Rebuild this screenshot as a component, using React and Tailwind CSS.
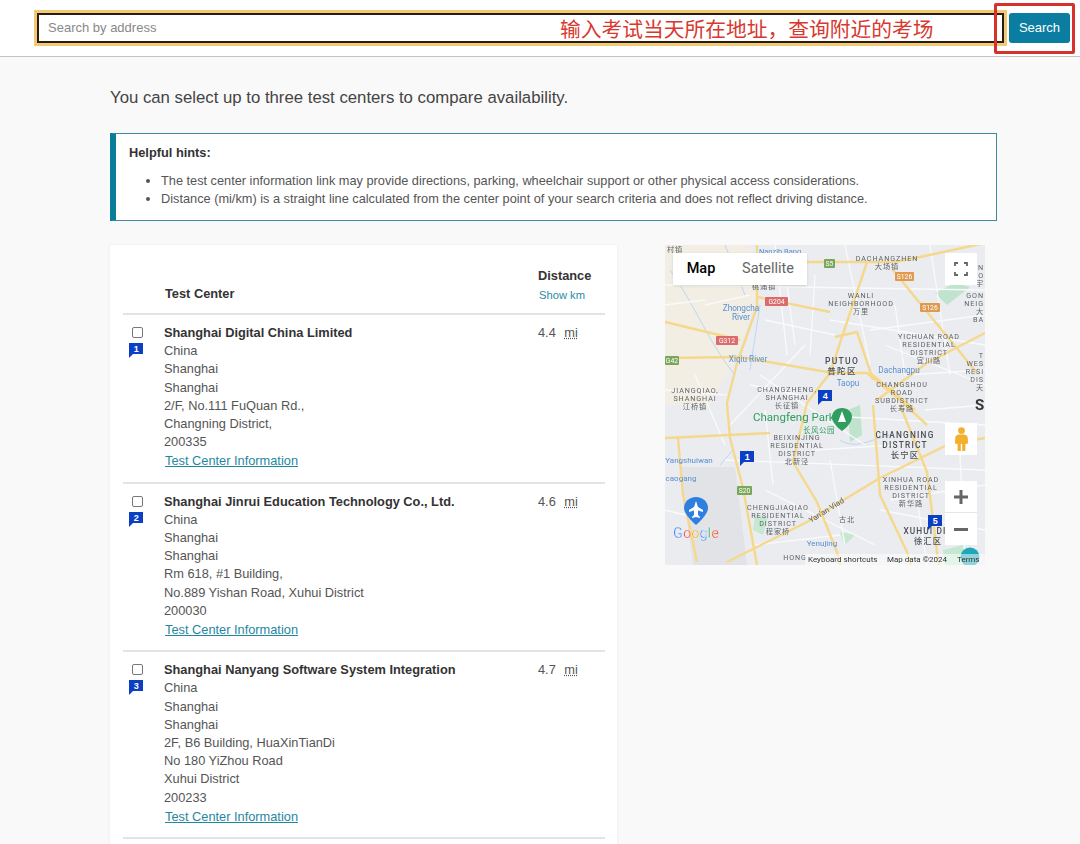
import React from "react";

const centers = [
  { n: 1, name: "Shanghai Digital China Limited", dist: "4.4", lines: ["China", "Shanghai", "Shanghai", "2/F, No.111 FuQuan Rd.,", "Changning District,", "200335"] },
  { n: 2, name: "Shanghai Jinrui Education Technology Co., Ltd.", dist: "4.6", lines: ["China", "Shanghai", "Shanghai", "Rm 618, #1 Building,", "No.889 Yishan Road, Xuhui District", "200030"] },
  { n: 3, name: "Shanghai Nanyang Software System Integration", dist: "4.7", lines: ["China", "Shanghai", "Shanghai", "2F, B6 Building, HuaXinTianDi", "No 180 YiZhou Road", "Xuhui District", "200233"] },
];

const majorRoads = [
  "M142 17 L230 17 L255 12 L320 -2",
  "M92 -5 L92 62 L72 118 L62 158 L65 193 L78 243 L92 320",
  "M0 113 L75 112 L168 128 L202 128 L235 155 L262 180",
  "M202 17 L165 128 L142 158 L128 217 L152 257 L172 307 L175 320",
  "M92 52 L165 67",
  "M0 77 L75 95",
  "M170 92 L192 87 L208 135",
  "M228 25 L258 62 L312 128",
  "M212 155 L262 118 L320 88",
  "M208 160 L212 210 L215 250 L242 307 L246 320",
  "M62 317 L142 277 L215 233 L282 200 L320 193",
  "M0 193 L105 188",
  "M13 193 L18 250 L32 317",
  "M235 160 L262 227 L272 307 L274 320",
  "M205 128 L250 165",
];

const minorRoads = [
  "M0 40 L320 45", "M110 0 L122 110", "M165 75 L320 100", "M0 145 L62 150", "M60 215 L320 225",
  "M180 0 L205 120", "M265 0 L285 130", "M0 265 L20 270", "M95 130 L200 200", "M140 100 L65 180",
  "M30 130 L60 200", "M220 100 L320 140", "M100 245 L210 300", "M150 170 L320 180", "M40 60 L85 50",
  "M120 25 L130 100", "M150 30 L145 110", "M230 60 L240 130", "M100 75 L170 90", "M205 85 L320 70",
  "M85 140 L135 150", "M100 165 L108 240", "M150 205 L230 200", "M165 215 L180 300", "M225 255 L320 240",
  "M90 300 L175 290", "M250 240 L262 320", "M295 210 L300 320", "M215 265 L320 285", "M240 130 L320 125",
  "M260 165 L320 160", "M0 60 L40 55",
];

function Flag({ n, className }) {
  return (
    <svg viewBox="0 0 14 15" className={className} aria-hidden="true">
      <path d="M0 0H14V11H4L0 15Z" fill="#0b3fc4" />
      <text x="7.2" y="8.8" textAnchor="middle" fontSize="9" fontWeight="700" fill="#fff" fontFamily="Liberation Sans, sans-serif">{n}</text>
    </svg>
  );
}

function Label({ x, y, lines, size = 7.2, color = "#5f6368", spacing = 0.9, weight = 400, lh = 8, anchor = "middle" }) {
  return (
    <text x={x} y={y} textAnchor={anchor} fontSize={size} fill={color} fontWeight={weight} letterSpacing={spacing} fontFamily="Roboto, 'Noto Sans CJK SC', sans-serif">
      {lines.map((l, i) => (
        <tspan key={i} x={x} dy={i === 0 ? 0 : lh}>{l}</tspan>
      ))}
    </text>
  );
}

function Shield({ x, y, w, t, fill }) {
  return (
    <g>
      <rect x={x} y={y} width={w} height="9" rx="1" fill={fill} />
      <text x={x + w / 2} y={y + 6.9} textAnchor="middle" fontSize="6.8" fill="#fff" fontFamily="Roboto, sans-serif">{t}</text>
    </g>
  );
}

function MapDrawing() {
  return (
    <svg viewBox="0 0 320 320" className="block h-full w-full blur-[0.35px]" aria-hidden="true">
      <rect width="320" height="320" fill="#eaecef" />
      <path d="M0 0H85L92 50L70 115L45 160H0Z" fill="#f2eee3" />
      <path d="M15 222L70 222L82 320H28Z" fill="#e1e3e6" />
      <path d="M270 48L290 38L305 42L282 60Z" fill="#bfe3cc" />
      <path d="M183 165L195 160L197 190L185 197Z" fill="#bfe3cc" />
      <path d="M90 270L103 272L98 290L88 285Z" fill="#c6e8d0" />
      <path d="M175 287L190 290L180 300Z" fill="#c6e8d0" />
      <path d="M278 305L298 300L305 320H280Z" fill="#c6e8d0" />
      <path d="M60 0L80 50M5 25C30 60 45 100 70 130M95 60L85 125M68 205L55 220M175 195C190 205 205 195 225 190" stroke="#b9d3f0" strokeWidth="0.9" fill="none" />
      {minorRoads.map((d) => (
        <path key={d} d={d} stroke="#f9fafb" strokeWidth="1.3" fill="none" />
      ))}
      {majorRoads.map((d) => (
        <path key={d} d={d} stroke="#f5d88c" strokeWidth="2.4" fill="none" strokeLinejoin="round" />
      ))}
      <Shield x={100} y={52} w={23} t="G204" fill="#dc6b6b" />
      <Shield x={51} y={91} w={22} t="G312" fill="#dc6b6b" />
      <Shield x={159} y={14} w={11} t="S5" fill="#7aa65a" />
      <Shield x={0} y={111} w={14} t="G42" fill="#7aa65a" />
      <Shield x={72} y={241} w={15} t="S20" fill="#7aa65a" />
      <Shield x={230} y={27} w={19} t="S126" fill="#dd9a50" />
      <Shield x={255} y={58} w={20} t="S126" fill="#dd9a50" />
      <Label x={222} y={16} lines={["DACHANGZHEN", "大场镇"]} />
      <Label x={196} y={53} lines={["WANLI", "NEIGHBORHOOD", "万里"]} />
      <Label x={264} y={94} lines={["YICHUAN ROAD", "RESIDENTIAL", "DISTRICT", "宜川路"]} />
      <Label x={177} y={119} lines={["PUTUO", "普陀区"]} size={8.5} lh={10} spacing={1.3} color="#4b4f54" weight={500} />
      <Label x={237} y={142} lines={["CHANGSHOU", "ROAD", "SUBDISTRICT", "长寿路"]} />
      <Label x={122} y={147} lines={["CHANGZHENG,", "SHANGHAI", "长征镇"]} />
      <Label x={30} y={148} lines={["JIANGQIAO,", "SHANGHAI", "江桥镇"]} />
      <Label x={132} y={195} lines={["BEIXINJING", "RESIDENTIAL", "DISTRICT", "北新泾"]} />
      <Label x={240} y={193} lines={["CHANGNING", "DISTRICT", "长宁区"]} size={8.3} lh={10} spacing={1.2} color="#4b4f54" weight={500} />
      <Label x={113} y={265} lines={["CHENGJIAQIAO", "RESIDENTIAL", "DISTRICT", "程家桥"]} />
      <Label x={246} y={237} lines={["XINHUA ROAD", "RESIDENTIAL", "DISTRICT", "新华路"]} />
      <Label x={263} y={289} lines={["XUHUI DIS", "徐汇区"]} size={8.3} lh={10} spacing={1.1} color="#4b4f54" weight={500} />
      <Label x={182} y={277} lines={["古北"]} size={7} />
      <Label x={130} y={315} lines={["HONG"]} />
      <Label x={99} y={44} lines={["桃浦镇"]} />
      <Label x={10} y={7} lines={["村镇"]} />
      <Label x={115} y={9} lines={["Nanzih Bang"]} size={7.5} spacing={0} color="#5a8fd0" />
      <Label x={319} y={53} anchor="end" lines={["GON", "NEIG", "大"]} />
      <Label x={319} y={25} anchor="end" lines={["JIN", "BO", "宇"]} />
      <Label x={319} y={77} anchor="end" lines={["BA"]} />
      <Label x={319} y={113} anchor="end" lines={["T", "WES", "RESI", "DIS", "天"]} />
      <Label x={76} y={66} lines={["Zhongcha", "River"]} size={8.2} lh={9} spacing={0} color="#5a8fd0" />
      <Label x={83} y={117} lines={["Xiqiu River"]} size={8.2} spacing={0} color="#5a8fd0" />
      <Label x={183} y={141} lines={["Taopu"]} size={8.2} spacing={0} color="#5a8fd0" />
      <Label x={234} y={128} lines={["Dachangpu"]} size={8.2} spacing={0} color="#5a8fd0" />
      <Label x={24} y={218} lines={["Yangshuiwan"]} size={8} spacing={0} color="#5a8fd0" />
      <Label x={16} y={236} lines={["caogang"]} size={8} spacing={0} color="#5a8fd0" />
      <Label x={157} y={301} lines={["Yenujing"]} size={8} spacing={0} color="#5a8fd0" />
      <text x="146" y="278" transform="rotate(-32 146 278)" fontSize="7.8" fill="#5f6368" fontFamily="Roboto, sans-serif">Yan'an Viad</text>
      <text x="88" y="176" fontSize="11.5" fill="#2f9e5f" fontFamily="Roboto, sans-serif">Changfeng Park</text>
      <Label x={154} y={188} lines={["长风公园"]} size={7.5} spacing={0.5} color="#2f9e5f" />
      <path d="M177 163C171 163 167 167 167 172C167 179 177 186 177 186C177 186 187 179 187 172C187 167 183 163 177 163Z" fill="#2f9e5f" />
      <path d="M177 166L173 177H181Z" fill="#fff" />
      <path d="M31 252C24 252 19 257 19 263C19 270 31 280 31 280C31 280 43 270 43 263C43 257 38 252 31 252Z" fill="#2f7fe0" />
      <path d="M31 256L33 262L38 265V267L33 265.5V270L35 272V273L31 272L27 273V272L29 270V265.5L24 267V265L29 262Z" fill="#fff" />
      <text x="8" y="293" fontSize="14.5" fontFamily="Roboto, sans-serif" stroke="#fff" strokeWidth="0.3">
        <tspan fill="#4285f4">G</tspan><tspan fill="#ea4335">o</tspan><tspan fill="#e8a905">o</tspan><tspan fill="#4285f4">g</tspan><tspan fill="#34a853">l</tspan><tspan fill="#ea4335">e</tspan>
      </text>
      <circle cx="305" cy="312" r="9.5" fill="#1fa7b8" />
      <rect x="140" y="309" width="180" height="11" fill="#fff" fillOpacity="0.5" />
      <text x="143" y="316.5" fontSize="8" fill="#333" fontFamily="Roboto, sans-serif">Keyboard shortcuts</text>
      <text x="222" y="316.5" fontSize="8" fill="#333" fontFamily="Roboto, sans-serif">Map data ©2024</text>
      <text x="292" y="316.5" fontSize="8" fill="#333" fontFamily="Roboto, sans-serif">Terms</text>
      <text x="310" y="165" fontSize="15" fontWeight="700" fill="#333" fontFamily="Roboto, sans-serif">S</text>
    </svg>
  );
}

function MapPanel() {
  return (
    <div className="relative h-[320px] w-[320px] overflow-hidden">
      <MapDrawing />
      <div className="absolute left-[8px] top-[8px] flex h-[32px] bg-white text-[14.5px] shadow-sm font-['Roboto',sans-serif]">
        <div className="flex w-[56px] items-center justify-center font-medium text-black">Map</div>
        <div className="flex w-[78px] items-center justify-center text-[#666]">Satellite</div>
      </div>
      <div className="absolute left-[280px] top-[8px] flex h-[32px] w-[32px] items-center justify-center bg-white">
        <svg viewBox="0 0 14 14" className="h-[14px] w-[14px]" fill="none" stroke="#666" strokeWidth="1.8" aria-hidden="true">
          <path d="M1 4V1H4M10 1H13V4M13 10V13H10M4 13H1V10" />
        </svg>
      </div>
      <div className="absolute left-[280px] top-[178px] flex h-[32px] w-[32px] items-center justify-center bg-white">
        <svg viewBox="0 0 13 24" className="h-[24px] w-[13px]" aria-hidden="true">
          <circle cx="6.5" cy="3.6" r="3.4" fill="#f3b02c" />
          <path d="M4 7.5H9C11 7.5 12.6 9 12.8 11L13 16.5L10.4 17V23C10.4 23.6 10 24 9.4 24H7.2V17H5.8V24H3.6C3 24 2.6 23.6 2.6 23V17L0 16.5L0.2 11C0.4 9 2 7.5 4 7.5Z" fill="#f3b02c" />
        </svg>
      </div>
      <div className="absolute left-[280px] top-[236px] flex h-[64px] w-[32px] flex-col items-center bg-white">
        <div className="flex h-[32px] w-full items-center justify-center border-b border-[#e6e6e6]">
          <svg viewBox="0 0 14 14" className="h-[14px] w-[14px]" aria-hidden="true"><path d="M5.5 0H8.5V5.5H14V8.5H8.5V14H5.5V8.5H0V5.5H5.5Z" fill="#666" /></svg>
        </div>
        <div className="flex h-[32px] w-full items-center justify-center">
          <svg viewBox="0 0 14 3" className="h-[3px] w-[14px]" aria-hidden="true"><path d="M0 0H14V3H0Z" fill="#666" /></svg>
        </div>
      </div>
      <Flag n={4} className="absolute left-[153px] top-[145px] h-[15px] w-[14px]" />
      <Flag n={1} className="absolute left-[75px] top-[206px] h-[15px] w-[14px]" />
      <Flag n={5} className="absolute left-[263px] top-[270px] h-[15px] w-[14px]" />
    </div>
  );
}

function CenterRow({ c }) {
  return (
    <div className="grid grid-cols-[41px_1fr_67px] border-b-2 border-[#e4e4e4] pb-[11px] pt-[9px]">
      <div className="flex flex-col pt-[3px]">
        <input type="checkbox" className="ml-[9px] h-[11px] w-[11px] appearance-none rounded-[2px] border border-[#777] bg-white" />
        <Flag n={c.n} className="ml-[6px] mt-[5px] h-[15px] w-[14px]" />
      </div>
      <div className="leading-[18.2px]">
        <div className="font-bold text-[#333]">{c.name}</div>
        {c.lines.map((l, i) => (
          <div key={i}>{l}</div>
        ))}
        <a href="#" className="ml-[1px] mt-[1px] block text-[#1f87a0] underline">Test Center Information</a>
      </div>
      <div className="leading-[18.2px]">
        {c.dist} <span className="ml-[5px] underline decoration-dotted">mi</span>
      </div>
    </div>
  );
}

export default function App() {
  return (
    <div className="h-[844px] w-[1080px] overflow-hidden bg-[#f9f9f9] font-['Liberation_Sans',Arial,sans-serif] text-[12.8px] text-[#555]">
      <header className="relative flex h-[57px] items-start gap-[2px] border-b border-[#c4c4c4] bg-white pl-[34px] pt-[10px]">
        <div className="h-[36px] w-[973px] border-[3px] border-[#f0cb72]">
          <div className="flex h-full items-center border-2 border-[#2a1c12] bg-white pl-[9px] pb-[1px] text-[13px] text-[#888]">Search by address</div>
        </div>
        <button className="mt-[3px] h-[30px] w-[61px] rounded-[3px] bg-[#0a7da0] pb-[1px] text-[13px] text-white">Search</button>
        <div className="absolute left-[560px] top-[14px] text-[20.75px] leading-[28px] text-[#d8392f] font-['Noto_Sans_CJK_SC',sans-serif]">输入考试当天所在地址，查询附近的考场</div>
        <div className="absolute left-[994px] top-[3px] h-[51px] w-[81px] rounded-[2px] border-[3px] border-[#d8302a]" />
      </header>

      <main className="ml-[110px] w-[887px]">
        <p className="mt-[31px] text-[16.75px] leading-[20px] text-[#444]">You can select up to three test centers to compare availability.</p>

        <section className="mt-[25px] h-[88px] border border-l-[6px] border-[#3e8b9c] border-l-[#0a7d98] bg-white pl-[13px] pt-[10px]">
          <div className="font-bold leading-[18px] text-[#333]">Helpful hints:</div>
          <ul className="mt-[10px] list-disc pl-[32px] text-[12.75px] leading-[18.3px]">
            <li>The test center information link may provide directions, parking, wheelchair support or other physical access considerations.</li>
            <li>Distance (mi/km) is a straight line calculated from the center point of your search criteria and does not reflect driving distance.</li>
          </ul>
        </section>

        <div className="mt-[24px] flex items-start">
          <section className="h-[700px] w-[507px] bg-white pl-[13px] pr-[12px] shadow-[0_0_3px_rgba(0,0,0,0.07)]">
            <div className="grid h-[70px] grid-cols-[41px_1fr_67px] border-b-2 border-[#e4e4e4]">
              <div />
              <div className="pl-[1px] pt-[41px] font-bold leading-[16px] text-[#333]">Test Center</div>
              <div className="pt-[23px]">
                <div className="font-bold leading-[16px] text-[#333]">Distance</div>
                <div className="ml-[1px] mt-[4px] text-[11.2px] leading-[14px] text-[#2a8ca5]">Show km</div>
              </div>
            </div>
            {centers.map((c) => (
              <CenterRow key={c.n} c={c} />
            ))}
          </section>
          <div className="ml-[48px]">
            <MapPanel />
          </div>
        </div>
      </main>
    </div>
  );
}
